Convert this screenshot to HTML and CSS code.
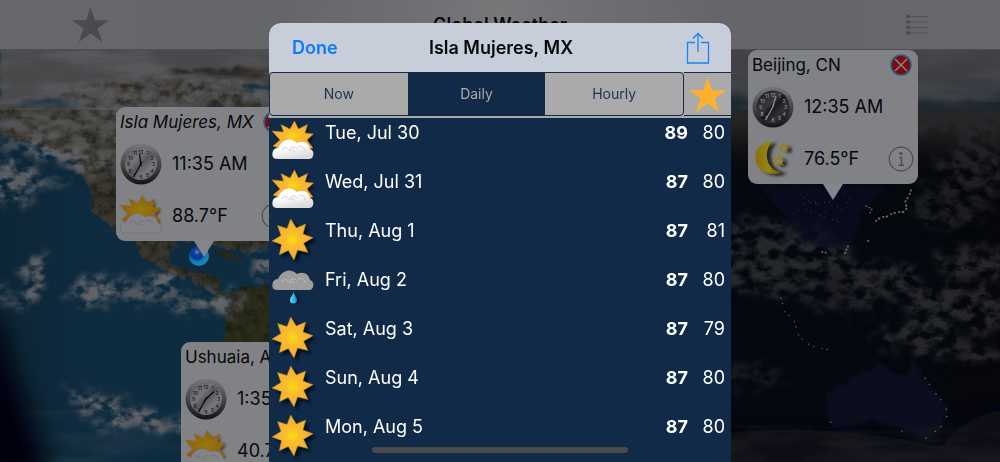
FILE: index.html
```html
<!DOCTYPE html>
<html lang="en">
<head>
<meta charset="utf-8">
<meta name="viewport" content="width=device-width, initial-scale=1">
<title>Global Weather</title>
<link rel="stylesheet" href="styles.css">
</head>
<body>
<svg class="defs" aria-hidden="true">
  <defs>
    <radialGradient id="sunFill"><stop offset="0" stop-color="#fbdc12"/><stop offset=".35" stop-color="#f9bd2c"/><stop offset="1" stop-color="#f7a83c"/></radialGradient>
    <radialGradient id="sunDim"><stop offset="0" stop-color="#947c0c"/><stop offset="1" stop-color="#8f5a14"/></radialGradient>
    <linearGradient id="cloudFill" x2=".4" y2="1"><stop offset=".5" stop-color="#fff"/><stop offset="1" stop-color="#dcdcdc"/></linearGradient>
    <linearGradient id="drop"><stop offset="0" stop-color="#58e4ff"/><stop offset="1" stop-color="#0a8bd0"/></linearGradient>
    <linearGradient id="rim" x2="0" y2="1"><stop offset="0" stop-color="#77787b"/><stop offset=".5" stop-color="#47484a"/><stop offset="1" stop-color="#141415"/></linearGradient>
    <linearGradient id="faceLight" x2="1" y2="1"><stop offset="0" stop-color="#555658"/><stop offset=".35" stop-color="#747577"/><stop offset=".5" stop-color="#55565a"/><stop offset=".7" stop-color="#77787b"/><stop offset="1" stop-color="#505153"/></linearGradient>
    <linearGradient id="faceDark" x2="1" y2="1"><stop offset="0" stop-color="#1b1b1d"/><stop offset=".4" stop-color="#37383a"/><stop offset=".5" stop-color="#19191b"/><stop offset=".7" stop-color="#303133"/><stop offset="1" stop-color="#131315"/></linearGradient>
    <linearGradient id="moonFill"><stop offset="0" stop-color="#89700a"/><stop offset=".5" stop-color="#948510"/><stop offset="1" stop-color="#80500c"/></linearGradient>
    <filter id="soft" x="-30%" y="-30%" width="160%" height="160%"><feGaussianBlur stdDeviation="1.5"/></filter>
  </defs>
  <symbol id="burst" viewBox="0 0 42 42"><path d="M18.7 0 24.3 9 33.7 5 31 15 41 18.7 31.6 24.2 36 33.5 25.6 31 22 41 16.3 31.6 7.3 35.7 9.5 25.6 0 22 9 16.4 5.5 6.5 15 9.5Z"/></symbol>
  <symbol id="burstLow" viewBox="0 0 42 36"><path d="M22.500 0 26.500 8 35.500 3.500 33 12 41.500 13 35 19 41 27 28 30 14 30 1 25 8 19 0 10 11.500 11 9 3.500 18 8Z"/></symbol>
  <symbol id="puff" viewBox="0 0 42 21"><path d="M5 20C1 20 0 17 .5 14 1 10 4 9 6 9 8 4 13 0 18 .5 21 1 23 2 25 4 31 1 37 4 38 10 41 11 42 14 41 17 40 20 38 20 35 20Z"/></symbol>
  <symbol id="puffLines" viewBox="0 0 42 21"><path d="M10 11C11 8 14 8 16 10M17 11C19 7 23 7 25 10M17 12C20 10 22 11 23 13M26 8C29 6 33 8 33 12" fill="none" stroke-width=".8"/></symbol>
  <symbol id="sunny" viewBox="0 0 46 46">
    <use href="#burst" x="3" y="3" width="42" height="42" fill="#020a14" filter="url(#soft)"/>
    <use href="#burst" width="42" height="42" fill="url(#sunFill)" stroke="#a98e20" stroke-width=".5"/>
  </symbol>
  <symbol id="partly" viewBox="0 0 46 46">
    <use href="#burstLow" x="3" y="3" width="40" height="34" fill="#020a14" filter="url(#soft)"/>
    <use href="#burstLow" width="42" height="36" fill="url(#sunFill)" stroke="#a98e20" stroke-width=".5"/>
    <use href="#puff" y="18" width="42" height="21" fill="url(#cloudFill)"/>
    <use href="#puffLines" y="18" width="42" height="21" stroke="#c9c9c9"/>
  </symbol>
  <symbol id="partlyDim" viewBox="0 0 42 42">
    <use href="#burstLow" x="4" y="3" width="38" height="34" fill="#333436" filter="url(#soft)"/>
    <use href="#burstLow" width="42" height="36" fill="url(#sunDim)"/>
    <use href="#puff" y="18" width="42" height="21" fill="#838487" stroke="#6b6c6f" stroke-width=".6"/>
    <use href="#puffLines" y="18" width="42" height="21" stroke="#707174"/>
  </symbol>
  <symbol id="rain" viewBox="0 0 46 46">
    <use href="#puff" y="2" width="42" height="21" fill="#9d9d9d"/>
    <use href="#puffLines" y="3" width="42" height="21" stroke="#c4c4c4"/>
    <path d="M23 24C23 28 27 30 27 33A4 4 0 0 1 20 33C20 30 23 28 23 24Z" fill="#020a14" filter="url(#soft)"/>
    <path d="M21.500 23C21.500 27 25 29 25 32A3.500 3.500 0 0 1 18 32C18 29 21.500 27 21.500 23Z" fill="url(#drop)"/>
  </symbol>
  <symbol id="night" viewBox="0 0 42 42">
    <path d="M22 4C-2 5-2 37 24 37 27 37 30 36 32 34 16 33 11 14 22 4Z" transform="translate(3 1)" fill="#252628" filter="url(#soft)"/>
    <path d="M21 3C-3 4-3 36 23 36 26 36 28 35 29 34 13 32 11 12 21 3Z" fill="url(#moonFill)"/>
    <g filter="url(#soft)" fill="#252628"><circle cx="37" cy="12" r="3"/><circle cx="31" cy="25" r="4"/></g>
    <g fill="#838487" stroke="#97800f" stroke-width="1.400"><circle cx="32" cy="10" r="2.500"/><circle cx="27" cy="23" r="3.200"/></g>
    <path d="M32 5v2M32 13v2M27 10h2M35 10h2M28.500 6.500l1.500 1.500M34 12l1.500 1.500M35.500 6.500l-1.500 1.500M30 12l-1.500 1.500M27 16.500v2.500M27 27v2.500M20.500 23h2.500M31 23h2.500M22.500 18.500l2 2M29.500 25.500l2 2M31.500 18.500l-2 2M24.500 25.500l-2 2" stroke="#97800f" stroke-width="1.200"/>
  </symbol>
  <symbol id="star" viewBox="0 0 38 36"><path d="M19 0 23.400 13.500H38L26.300 22 31 36 19 27.300 7 36 11.700 22 0 13.500H14.600Z"/></symbol>
  <symbol id="close" viewBox="0 0 22 22"><circle cx="11" cy="11" r="10" fill="#7b0a12" stroke="#28647f" stroke-width="1.600"/><path d="M5 5l12 12M17 5 5 17" stroke="#8b8c90" stroke-width="1.400"/></symbol>
  <symbol id="info" viewBox="0 0 26 26"><circle cx="13" cy="13" r="11.800" fill="none" stroke="#4b4c4f" stroke-width="1.200"/><circle cx="13" cy="7.500" r="1.600" fill="#4b4c4f"/><path d="M11 11.500h2.500V19M10.500 19.200h5.500" stroke="#4b4c4f" stroke-width="1.500" fill="none"/></symbol>
</svg>

<main class="app">
  <svg class="map" viewBox="0 0 1000 462" preserveAspectRatio="xMidYMid slice" aria-hidden="true">
    <defs>
      <linearGradient id="sea"><stop offset="0" stop-color="#0d2637"/><stop offset=".1" stop-color="#0e2b3f"/><stop offset=".27" stop-color="#0e2c40"/><stop offset=".5" stop-color="#08111b"/><stop offset=".7" stop-color="#05080f"/><stop offset="1" stop-color="#05070d"/></linearGradient>
      <linearGradient id="nightTop" x2="0" y2="1"><stop offset="0" stop-color="#424348"/><stop offset=".28" stop-color="#3a3b40"/><stop offset=".42" stop-color="#1b2732"/><stop offset=".52" stop-color="#262623"/><stop offset=".75" stop-color="#131315"/><stop offset="1" stop-color="#05070d" stop-opacity="0"/></linearGradient>
      <filter id="cloud" x="-10%" y="-30%" width="120%" height="160%" color-interpolation-filters="sRGB">
        <feTurbulence type="fractalNoise" baseFrequency=".07 .1" numOctaves="5" seed="7" result="n"/>
        <feDisplacementMap in="SourceGraphic" in2="n" scale="34" xChannelSelector="R" yChannelSelector="G" result="d"/>
        <feGaussianBlur in="d" stdDeviation="3" result="b"/>
        <feColorMatrix in="n" values="0 0 0 0 0  0 0 0 0 0  0 0 0 0 0  0 0 3.500 0 -1.200" result="m"/>
        <feComposite in="b" in2="m" operator="in"/>
      </filter>
      <filter id="wisps" x="0" y="0" width="100%" height="100%" color-interpolation-filters="sRGB">
        <feTurbulence type="fractalNoise" baseFrequency=".012 .06" numOctaves="5" seed="12" result="n"/>
        <feColorMatrix in="n" values="0 0 0 0 0  0 0 0 0 0  0 0 0 0 0  3 0 0 0 -1.100" result="m"/>
        <feComposite in="SourceGraphic" in2="m" operator="in"/>
      </filter>
      <filter id="ground" x="-5%" y="-5%" width="110%" height="110%" color-interpolation-filters="sRGB">
        <feTurbulence type="fractalNoise" baseFrequency=".12" numOctaves="4" seed="3" result="n"/>
        <feDisplacementMap in="SourceGraphic" in2="n" scale="12" xChannelSelector="R" yChannelSelector="G" result="d"/>
        <feColorMatrix in="n" values="0 0 0 0 .1  0 0 0 0 .12  0 0 0 0 .08  0 2.500 0 0 -1" result="m"/>
        <feComposite in="m" in2="d" operator="in" result="t"/>
        <feMerge><feMergeNode in="d"/><feMergeNode in="t"/></feMerge>
      </filter>
      <filter id="coast" x="-5%" y="-5%" width="110%" height="110%" color-interpolation-filters="sRGB">
        <feTurbulence type="fractalNoise" baseFrequency=".09" numOctaves="4" seed="3" result="n"/>
        <feDisplacementMap in="SourceGraphic" in2="n" scale="10" xChannelSelector="R" yChannelSelector="G"/>
        <feGaussianBlur stdDeviation="1.500"/>
      </filter>
      <filter id="blur8" x="-20%" y="-40%" width="140%" height="180%"><feGaussianBlur stdDeviation="8"/></filter>
      <filter id="blur14" x="-100%" y="-40%" width="300%" height="180%"><feGaussianBlur stdDeviation="12"/></filter>
      <radialGradient id="orb" cx=".4" cy=".3"><stop offset="0" stop-color="#5f8fb0"/><stop offset=".3" stop-color="#0d3f9a"/><stop offset=".7" stop-color="#0a3c94"/><stop offset="1" stop-color="#1585b8"/></radialGradient>
    </defs>
    <rect width="1000" height="462" fill="url(#sea)"/>
    <g filter="url(#ground)">
      <path d="M0 60H280V245L240 252 196 240 176 240 170 252 174 266 192 272 214 276 222 292 240 296 236 300 216 294 196 282 168 272 146 260 132 240 122 240 112 226 94 212 88 184 74 160 44 146 0 138Z" fill="#37352e"/>
      <path d="M90 185 120 160V230L96 212Z" fill="#3d352e"/>
      <path d="M232 292 262 286 290 296V345H224L226 320Z" fill="#2b2d19"/>
      <path d="M234 290 248 292 238 318 228 322 222 312Z" fill="#39322e"/>
      <path d="M214 252 226 252 246 260 236 262 216 256Z" fill="#2b2b1c"/>
      <path d="M70 80 240 76V108H80Z" fill="#413a38"/>
    </g>
    <path d="M0 40H280V66L180 70 70 86 56 102 0 104Z" fill="#48494b" filter="url(#coast)"/>
    <path d="M10 104C30 97 70 97 84 104 60 110 30 109 10 104ZM232 84 270 84V100L246 92Z" fill="#1a2c3a" filter="url(#coast)"/>
    <path d="M180 71 270 67V80L215 81Z" fill="#302b2a" opacity=".7" filter="url(#coast)"/>
    <g fill="#626366">
      <rect y="50" width="275" height="60" filter="url(#wisps)" opacity=".6"/>
      <rect y="108" width="275" height="56" filter="url(#wisps)" opacity=".35"/>
      <g filter="url(#cloud)">
        <path d="M60 85 270 76V108H70Z" opacity=".6"/>
        <path d="M0 112 120 108V170L90 182 60 160 0 150Z" opacity=".6"/>
        <ellipse cx="50" cy="152" rx="34" ry="8"/><ellipse cx="14" cy="182" rx="28" ry="22" opacity=".9"/><ellipse cx="45" cy="182" rx="20" ry="5" opacity=".6"/>
        <ellipse cx="75" cy="162" rx="20" ry="14" opacity=".8"/>
        <ellipse cx="34" cy="280" rx="12" ry="26" transform="rotate(20 34 280)"/><ellipse cx="12" cy="298" rx="28" ry="7" opacity=".7"/>
        <ellipse cx="97" cy="290" rx="26" ry="15"/><ellipse cx="140" cy="291" rx="30" ry="14" opacity=".8"/>
        <ellipse cx="164" cy="282" rx="14" ry="14"/><ellipse cx="188" cy="303" rx="22" ry="8" opacity=".8"/><ellipse cx="220" cy="300" rx="26" ry="10"/>
        <ellipse cx="262" cy="266" rx="14" ry="14"/>
        <path d="M64 388 110 396 184 422V438L130 428 80 412Z"/><path d="M64 388 110 396 184 422V438L130 428 80 412Z" opacity=".6"/><path d="M70 410 120 430 100 436Z" opacity=".5"/>
      </g>
      <rect y="410" width="190" height="52" filter="url(#wisps)" opacity=".15"/>
    </g>
    <path d="M-20 310 0 320 14 370 40 440 50 480H-20Z" fill="#04050a" filter="url(#blur14)"/>

    <rect x="731" y="49" width="269" height="130" fill="url(#nightTop)"/>
    <g fill="#4a4b4f"><rect x="731" y="50" width="269" height="60" filter="url(#wisps)" opacity=".6"/></g>
    <g fill="#26272b" filter="url(#cloud)">
      <ellipse cx="965" cy="122" rx="55" ry="16"/><ellipse cx="980" cy="165" rx="40" ry="28" opacity=".8"/><ellipse cx="950" cy="205" rx="40" ry="24" opacity=".7"/>
      <path d="M731 215 830 225 870 265 900 270 880 320 820 310 731 290Z" opacity=".7"/>
      <ellipse cx="770" cy="258" rx="75" ry="30"/><ellipse cx="880" cy="280" rx="36" ry="20"/><ellipse cx="975" cy="262" rx="42" ry="18"/>
      <ellipse cx="938" cy="305" rx="36" ry="24"/><ellipse cx="985" cy="310" rx="22" ry="26"/><ellipse cx="920" cy="338" rx="50" ry="12"/><ellipse cx="970" cy="355" rx="40" ry="7"/>
      <ellipse cx="755" cy="375" rx="30" ry="14" opacity=".5"/>
    </g>
    <path d="M825 394 857 374 877 363 907 378 913 358 927 381 948 408 940 428 930 441 903 431 870 421 830 431Z" fill="#0b0e1e" filter="url(#coast)"/>
    <path d="M760 186H890L868 206 860 222 850 246 820 252 800 235 780 210Z" fill="#0a0e22" opacity=".7" filter="url(#coast)"/>
    <path d="M731 432Q860 425 940 448 970 410 1010 410V480H731Z" fill="#0f1013" filter="url(#blur8)"/>
    <g fill="#26272b"><rect x="731" y="425" width="269" height="37" filter="url(#wisps)" opacity=".4"/></g>
    <g fill="none" stroke-linecap="round" stroke="#6a6856">
      <path d="M876 221 881 217 886 217 891 214 898 212 904 212 907 208 905 202 909 196 911 190" stroke-width="1.800" stroke-dasharray=".5 3 1 4"/>
      <path d="M866 206 872 209 870 213" stroke-width="1.500" stroke-dasharray=".5 3"/>
      <path d="M800 194 812 204 830 202 842 210 850 198 838 190M806 210 822 216 840 222M794 214 812 198 826 212" stroke-width=".8" stroke-dasharray=".1 5 .1 9"/>
      <path d="M845 253 848 246M822 252 828 253M868 241 870 240" stroke-width="1.800" stroke-dasharray=".5 3"/>
      <path d="M781 298 785 312 794 320 798 334 804 342 815 347 830 350" stroke-width="1.100" stroke-dasharray=".5 5 .5 8"/>
      <path d="M925 378 936 394 946 406 947 416 940 428 922 441M831 422v1M902 431v1" stroke-width="1.200" stroke-dasharray=".5 7 .5 11"/>
    </g>
    <circle cx="199" cy="256" r="10" fill="url(#orb)"/>
  </svg>

  <header class="toolbar">
    <button class="icon-btn" aria-label="Favorites"><svg width="37" height="35"><use href="#star" fill="#4a4b4e"/></svg></button>
    <h1 class="toolbar-title">Global Weather</h1>
    <button class="icon-btn end" aria-label="City list">
      <svg width="22" height="22" viewBox="0 0 22 22" stroke="#515255"><path d="M2 2.500h20M2 8h20M2 13.500h20M2 19h20"/><g fill="#4d4e51" stroke="none"><circle cx="2" cy="2.500" r="2"/><circle cx="2" cy="8" r="2"/><circle cx="2" cy="13.500" r="2"/><circle cx="2" cy="19" r="2"/></g></svg>
    </button>
  </header>

  <article class="pin pin-isla">
    <div class="pin-head"><h2 class="pin-name current">Isla Mujeres, MX</h2><button class="round-btn" aria-label="Remove Isla Mujeres"><svg width="22" height="22"><use href="#close"/></svg></button></div>
    <div class="pin-row">
      <svg class="clock" viewBox="0 0 42 42" aria-hidden="true"><circle cx="21" cy="21" r="20.500" fill="url(#rim)"/><circle cx="21" cy="21" r="16" fill="url(#faceLight)"/>
        <g id="numerals" class="dial-text">
          <text x="21" y="10.500">12</text><text x="27.500" y="12">1</text><text x="32" y="16.500">2</text><text x="33.500" y="23">3</text><text x="32" y="29.500">4</text><text x="27.500" y="34">5</text><text x="21" y="35.800">6</text><text x="14.500" y="34">7</text><text x="10" y="29.500">8</text><text x="8.500" y="23">9</text><text x="10.500" y="16.500">10</text><text x="15" y="12">11</text>
        </g>
        <path d="M21 23 19.500 11M22 19 13.500 34" stroke="#0a0a0a" stroke-width="1.300"/></svg>
      <span>11:35 AM</span>
    </div>
    <div class="pin-row">
      <svg class="wx" aria-hidden="true"><use href="#partlyDim"/></svg><span>88.7°F</span>
      <button class="round-btn info" aria-label="Isla Mujeres details"><svg width="26" height="26"><use href="#info"/></svg></button>
    </div>
  </article>

  <article class="pin pin-ushuaia">
    <div class="pin-head"><h2 class="pin-name">Ushuaia, AR</h2><button class="round-btn" aria-label="Remove Ushuaia"><svg width="22" height="22"><use href="#close"/></svg></button></div>
    <div class="pin-row">
      <svg class="clock" viewBox="0 0 42 42" aria-hidden="true"><circle cx="21" cy="21" r="20.500" fill="url(#rim)"/><circle cx="21" cy="21" r="16" fill="url(#faceLight)"/><use href="#numerals"/><path d="M19 23 29 13.500M22 19 13.500 34" stroke="#0a0a0a" stroke-width="1.300"/></svg>
      <span>1:35 PM</span>
    </div>
    <div class="pin-row">
      <svg class="wx" aria-hidden="true"><use href="#partlyDim"/></svg><span>40.7°F</span>
      <button class="round-btn info" aria-label="Ushuaia details"><svg width="26" height="26"><use href="#info"/></svg></button>
    </div>
  </article>

  <article class="pin pin-beijing">
    <div class="pin-head"><h2 class="pin-name">Beijing, CN</h2><button class="round-btn" aria-label="Remove Beijing"><svg width="22" height="22"><use href="#close"/></svg></button></div>
    <div class="pin-row">
      <svg class="clock dark" viewBox="0 0 42 42" aria-hidden="true"><circle cx="21" cy="21" r="20.500" fill="url(#rim)"/><circle cx="21" cy="21" r="16.500" fill="url(#faceDark)"/><use href="#numerals"/><path d="M20 23 24 10.500M22 19 13.500 34" stroke="#8b8c8f" stroke-width="1.300"/></svg>
      <span>12:35 AM</span>
    </div>
    <div class="pin-row">
      <svg class="wx" aria-hidden="true"><use href="#night"/></svg><span>76.5°F</span>
      <button class="round-btn info" aria-label="Beijing details"><svg width="26" height="26"><use href="#info"/></svg></button>
    </div>
  </article>

  <div class="overlay">
    <section class="sheet" role="dialog" aria-labelledby="sheet-title">
      <header class="sheet-head">
        <button class="done">Done</button>
        <h2 class="sheet-title" id="sheet-title">Isla Mujeres, MX</h2>
        <button class="share" aria-label="Share"><svg width="24" height="32" viewBox="0 0 24 32" fill="none" stroke="#1a83f7" stroke-width="1.300"><path d="M9 10.500H1.500V31H22.500V10.500H15M12 20V2M7 6.500 12 1.500 17 6.500"/></svg></button>
      </header>
      <nav class="tabs">
        <div class="segments">
          <button class="segment">Now</button>
          <button class="segment active" aria-current="true">Daily</button>
          <button class="segment">Hourly</button>
        </div>
        <button class="fav" aria-label="Favorite"><svg width="37" height="35"><use href="#star" fill="#fdb22f"/></svg></button>
      </nav>
      <table class="forecast">
        <tbody>
          <tr><td class="ico"><svg role="img" aria-label="Partly cloudy"><use href="#partly"/></svg></td><th scope="row">Tue, Jul 30</th><td class="high">89</td><td class="low">80</td></tr>
          <tr><td class="ico"><svg role="img" aria-label="Partly cloudy"><use href="#partly"/></svg></td><th scope="row">Wed, Jul 31</th><td class="high">87</td><td class="low">80</td></tr>
          <tr><td class="ico"><svg role="img" aria-label="Sunny"><use href="#sunny"/></svg></td><th scope="row">Thu, Aug 1</th><td class="high">87</td><td class="low">81</td></tr>
          <tr><td class="ico"><svg role="img" aria-label="Rain"><use href="#rain"/></svg></td><th scope="row">Fri, Aug 2</th><td class="high">87</td><td class="low">80</td></tr>
          <tr><td class="ico"><svg role="img" aria-label="Sunny"><use href="#sunny"/></svg></td><th scope="row">Sat, Aug 3</th><td class="high">87</td><td class="low">79</td></tr>
          <tr><td class="ico"><svg role="img" aria-label="Sunny"><use href="#sunny"/></svg></td><th scope="row">Sun, Aug 4</th><td class="high">87</td><td class="low">80</td></tr>
          <tr><td class="ico"><svg role="img" aria-label="Sunny"><use href="#sunny"/></svg></td><th scope="row">Mon, Aug 5</th><td class="high">87</td><td class="low">80</td></tr>
        </tbody>
      </table>
      <div class="home-bar"></div>
    </section>
  </div>
</main>
</body>
</html>
```
FILE: styles.css
```css
* { box-sizing: border-box; }

body {
  margin: 0;
  background: #04060d;
  font: 18px/22px Inter, "Liberation Sans", sans-serif;
  color: #08080a;
}

h1, h2 { margin: 0; font-size: inherit; }

button {
  padding: 0;
  border: 0;
  background: none;
  font: inherit;
  color: inherit;
  cursor: pointer;
}

svg { display: block; }

.defs { position: absolute; width: 0; height: 0; }

.app {
  position: relative;
  min-height: 100vh;
  overflow: hidden;
}

.map {
  position: absolute;
  inset: 0;
  width: 100%;
  height: 100%;
}

.toolbar {
  position: relative;
  display: grid;
  grid-template-columns: 1fr auto 1fr;
  align-items: center;
  height: 50px;
  padding: 0 72px;
  border-bottom: 1px solid #4c4d50;
  background: radial-gradient(circle at 50% 40%, #77787a 0, #6e6f72 90px, #656669 220px, #67686b 100%);
}

.toolbar-title { font-weight: 600; }
.icon-btn { justify-self: start; }
.icon-btn.end { justify-self: end; }

/* City cards pinned on the map */
.pin {
  position: absolute;
  display: flex;
  flex-direction: column;
  gap: 10px;
  width: 170px;
  padding: 4px;
  border-radius: 9px;
  background: #818286;
}

.pin::after {
  content: "";
  position: absolute;
  top: 100%;
  left: 50%;
  margin-left: -10px;
  border: 10px solid transparent;
  border-top: 16px solid #85868a;
  border-bottom: 0;
}

.pin-isla { left: 116px; top: 107px; width: 175px; }
.pin-ushuaia { left: 181px; top: 342px; }
.pin-beijing { left: 748px; top: 50px; }

.pin-head, .pin-row {
  display: flex;
  align-items: center;
}

.pin-head { justify-content: space-between; padding-right: 2px; }
.pin-name { font-size: 17px; font-weight: 400; white-space: nowrap; }
.pin-name.current { font-style: italic; }
.pin-row { gap: 10px; height: 42px; }
.clock { width: 42px; height: 42px; color: #101011; }
.clock.dark { color: #a0a1a4; }
.wx { width: 42px; height: 42px; }

.dial-text {
  fill: currentColor;
  font-size: 5px;
  text-anchor: middle;
}

.info { margin-left: auto; }

/* Forecast sheet */
.overlay {
  position: absolute;
  inset: 0;
  display: flex;
  justify-content: center;
  padding-top: 23px;
}

.sheet {
  position: relative;
  width: 462px;
  max-width: 100%;
  overflow: hidden;
  border-radius: 12px 12px 0 0;
  background: #112a48;
}

.sheet-head {
  display: grid;
  grid-template-columns: 1fr auto 1fr;
  align-items: center;
  height: 49px;
  padding: 0 21px 0 23px;
  background: #c7ceda;
}

.sheet-title { font-weight: 600; color: #08080a; }
.done { justify-self: start; font-weight: 600; color: #0a7aff; }
.share { justify-self: end; }

.tabs {
  display: flex;
  height: 46px;
  padding-bottom: 2px;
  background: #aaa;
}

.segments {
  flex: 1;
  display: flex;
  overflow: hidden;
  border: 1px solid #112a48;
  border-radius: 4px;
}

.segment {
  flex: 1;
  font-size: 14px;
  color: #1b3557;
}

.segment.active { background: #112a48; color: #aaa; }

.fav {
  display: grid;
  place-items: center;
  width: 47px;
  border: solid #112a48;
  border-width: 1px 0;
}

.forecast {
  width: 100%;
  border-collapse: collapse;
  color: #fff;
}

.forecast tr { height: 49px; }

.forecast td, .forecast th {
  padding: 4px 0 0;
  vertical-align: top;
  text-align: left;
  font-weight: 400;
}

.forecast .ico { width: 56px; padding: 3px 0 0 3px; }
.forecast .ico svg { width: 46px; height: 46px; }
.forecast .high { width: 40px; text-align: right; font-weight: 700; }
.forecast .low { width: 43px; padding-right: 6px; text-align: right; }

.home-bar {
  position: absolute;
  bottom: 9px;
  left: 50%;
  width: 256px;
  height: 6px;
  margin-left: -128px;
  border-radius: 3px;
  background: #4b4b4b;
}
```
